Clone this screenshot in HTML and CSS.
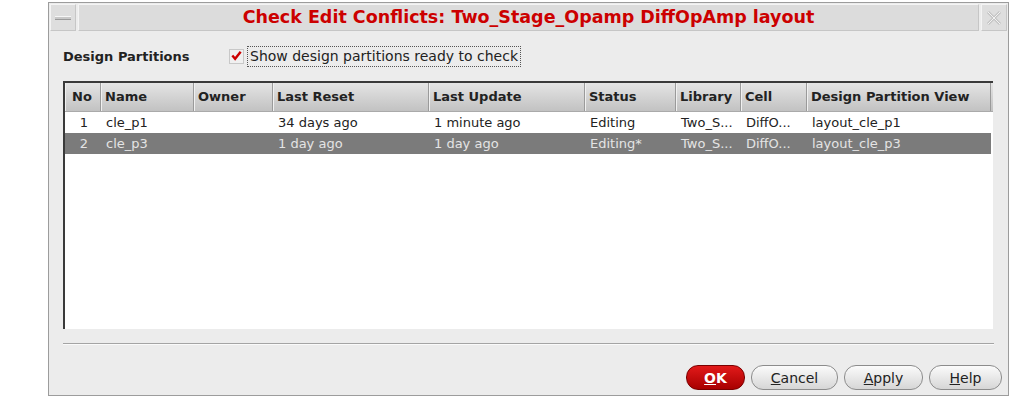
FILE: index.html
```html
<!DOCTYPE html>
<html>
<head>
    <meta charset="UTF-8">
    <title>Check Edit Conflicts</title>
    <link rel="stylesheet" href="styles.css">
</head>
<body>

	<div class="dialog">
	    <div class="titlebar">
	        <div class="tb_btn"><span class="min_bar"></span></div>
	        <div class="tb_title">Check Edit Conflicts: Two_Stage_Opamp DiffOpAmp layout</div>
	        <div class="tb_btn">
	            <svg width="18" height="18" viewBox="0 0 18 18">
	                <path d="M3 3 L15 15 M15 3 L3 15" stroke="#c4c4c4" stroke-width="3" fill="none"/>
	                <path d="M3 3 L15 15 M15 3 L3 15" stroke="#f2f2f2" stroke-width="1" fill="none"/>
	            </svg>
	        </div>
	    </div>

	    <div class="options">
	        <span class="opt_label">Design Partitions</span>
	        <span class="check_box">
	            <svg width="14" height="14" viewBox="0 0 14 14">
	                <path d="M2.5 6.5 L5.5 10 L11.5 2.5" stroke="#cc0000" stroke-width="2.6" fill="none"/>
	            </svg>
	        </span>
	        <span class="check_text">Show design partitions ready to check</span>
	    </div>

	    <div class="table">
	        <div class="row head">
	            <div class="cell">No</div>
	            <div class="cell">Name</div>
	            <div class="cell">Owner</div>
	            <div class="cell">Last Reset</div>
	            <div class="cell">Last Update</div>
	            <div class="cell">Status</div>
	            <div class="cell">Library</div>
	            <div class="cell">Cell</div>
	            <div class="cell">Design Partition View</div>
	        </div>
	        <div class="row">
	            <div class="cell num">1</div>
	            <div class="cell">cle_p1</div>
	            <div class="cell"></div>
	            <div class="cell">34 days ago</div>
	            <div class="cell">1 minute ago</div>
	            <div class="cell">Editing</div>
	            <div class="cell">Two_S...</div>
	            <div class="cell">DiffO...</div>
	            <div class="cell">layout_cle_p1</div>
	        </div>
	        <div class="row selected">
	            <div class="cell num">2</div>
	            <div class="cell">cle_p3</div>
	            <div class="cell"></div>
	            <div class="cell">1 day ago</div>
	            <div class="cell">1 day ago</div>
	            <div class="cell">Editing*</div>
	            <div class="cell">Two_S...</div>
	            <div class="cell">DiffO...</div>
	            <div class="cell">layout_cle_p3</div>
	        </div>
	    </div>

	    <div class="separator"></div>

	    <div class="buttons">
	        <button class="btn ok"><u>O</u>K</button>
	        <button class="btn cancel"><u>C</u>ancel</button>
	        <button class="btn apply"><u>A</u>pply</button>
	        <button class="btn help"><u>H</u>elp</button>
	    </div>
	</div>

</body>
</html>
```

FILE: styles.css
```css
*{
    margin: 0;
    padding: 0;
    box-sizing: border-box;
}
body{
    background: #ffffff;
    font-family: "DejaVu Sans", sans-serif;
    font-size: 13px;
    color: #222222;
}
.dialog{
    width: 961px;
    height: 394px;
    margin: 2px 0 0 48px;
    border: 1px solid #9c9c9c;
    background-color: #ececec;
    display: flex;
    flex-direction: column;
    padding: 1px 1px 0 1px;
}
/* title bar */
.titlebar{
    display: flex;
    height: 27px;
    gap: 2px;
}
.tb_btn{
    width: 26px;
    display: flex;
    align-items: center;
    justify-content: center;
    background: #dedede;
    border: 1px solid #c6c6c6;
    border-top-color: #f4f4f4;
    border-left-color: #f4f4f4;
}
.min_bar{
    display: block;
    width: 16px;
    height: 4px;
    background: #c8c8c8;
    border-top: 1px solid #f6f6f6;
    border-bottom: 1px solid #9a9a9a;
}
.tb_title{
    flex: 1;
    background: #dcdcdc;
    border: 1px solid #c6c6c6;
    border-top-color: #f4f4f4;
    border-left-color: #f4f4f4;
    color: #cc0000;
    font-weight: bold;
    font-size: 17.5px;
    text-align: center;
    line-height: 24px;
}
/* options row */
.options{
    display: flex;
    align-items: center;
    height: 24px;
    margin: 13px 0 0 13px;
}
.opt_label{
    font-weight: bold;
    width: 166px;
}
.check_box{
    width: 15px;
    height: 15px;
    background: #f0f0f0;
    border: 1px solid #c8c8c8;
    display: flex;
    align-items: center;
    justify-content: center;
}
.check_text{
    margin-left: 3px;
    padding: 1px 2px 2px 2px;
    border: 1px dotted #555555;
    font-size: 14px;
}
/* table */
.table{
    margin: 13px 0 0 13px;
    width: 930px;
    height: 248px;
    background: #ffffff;
    border-top: 2px solid #3a3a3a;
    border-left: 2px solid #3a3a3a;
}
.row{
    display: grid;
    grid-template-columns: 36px 93px 79px 156px 156px 91px 65px 66px 184px;
    height: 21px;
    align-items: center;
    font-size: 13px;
    line-height: 19px;
}
.row .cell{
    padding-left: 5px;
    padding-bottom: 1px;
    white-space: nowrap;
    overflow: hidden;
}
.row .num{
    text-align: center;
    padding-left: 2px;
}
.head{
    height: 29px;
    align-items: stretch;
    background: linear-gradient(#e4e4e4, #c2c2c2);
    font-weight: bold;
    border-bottom: 1px solid #aaaaaa;
}
.head .cell{
    display: flex;
    align-items: center;
    padding-left: 3px;
    padding-bottom: 2px;
    border-left: 1px solid #f0f0f0;
    border-right: 1px solid #9a9a9a;
}
.head .cell:first-child{
    padding-left: 6px;
}
.selected{
    background: #7b7b7b;
    color: #e4e4e4;
    width: 926px;
}
.separator{
    margin: 14px 0 0 13px;
    width: 931px;
    height: 2px;
    border-top: 1px solid #a4a4a4;
    border-bottom: 1px solid #fafafa;
}
/* buttons */
.buttons{
    display: flex;
    justify-content: flex-end;
    gap: 6px;
    margin-top: 20px;
    padding-right: 5px;
}
.btn{
    height: 25px;
    border-radius: 12px;
    border: 1px solid #8c8c8c;
    background: linear-gradient(#fbfbfb, #d6d6d6);
    font-family: "DejaVu Sans", sans-serif;
    font-size: 14px;
    color: #222222;
}
.ok{
    width: 59px;
    background: linear-gradient(#e21a1a, #a80000);
    border-color: #7a0000;
    color: #ffffff;
    font-weight: bold;
}
.cancel{
    width: 87px;
}
.apply{
    width: 79px;
}
.help{
    width: 73px;
}
```
